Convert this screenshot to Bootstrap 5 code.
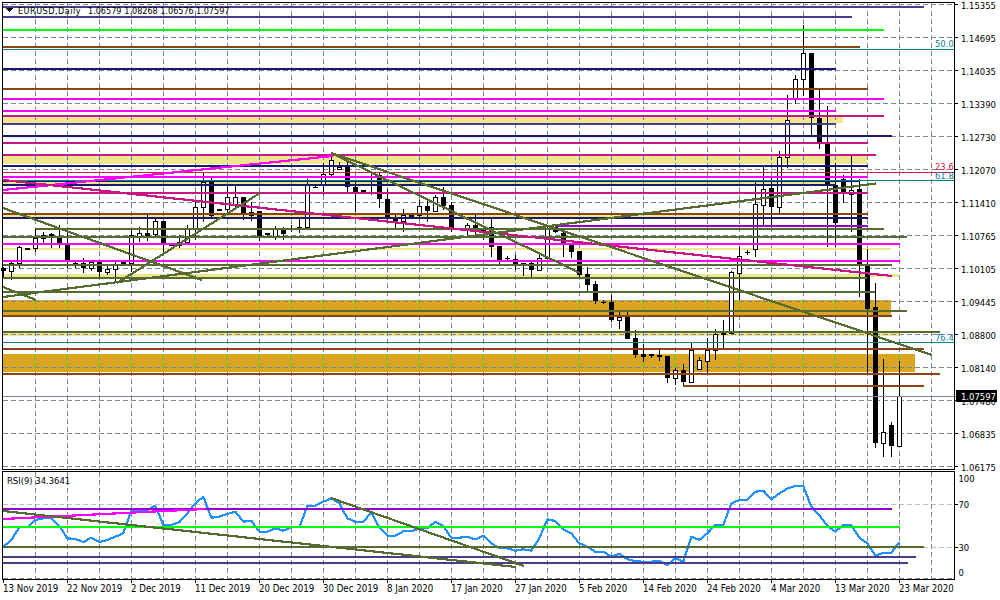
<!DOCTYPE html>
<html lang="en">
<head>
<meta charset="utf-8">
<title>EURUSD,Daily</title>
<link href="https://cdn.jsdelivr.net/npm/bootstrap@5.3.0/dist/css/bootstrap.min.css" rel="stylesheet">
<style>
html,body{margin:0;background:#fff;overflow:hidden}
.term{width:1000px;height:600px}
.term svg{display:block;flex:none;overflow:visible}
.term text{font-family:"DejaVu Sans Condensed","Liberation Sans",sans-serif;font-size:9.4px;fill:#000;dominant-baseline:central}
.term .hd{font-size:9px}
.term .sym{letter-spacing:.5px}
.term .pl{fill:#fff}
.term .dt{font-size:9.6px}
</style>
</head>
<body>
<div class="term d-flex flex-column bg-white" id="term">
<svg id="pane" width="1000" height="470" viewBox="0 0 1000 470" shape-rendering="crispEdges"></svg>
<svg id="osc" width="1000" height="110" viewBox="0 470 1000 110" shape-rendering="crispEdges"></svg>
<svg id="axis" width="1000" height="20" viewBox="0 580 1000 20" shape-rendering="crispEdges"></svg>
</div>
<script>
const C={dsb:'#483d8b',lime:'#00ff00',br:'#8b4513',nv:'#191970',mg:'#ff00ff',mvr:'#c71585',kh:'#f0e68c',ol:'#556b2f',dv:'#9400d3',go:'#daa520',gr:'#778899'};
const rect=(x,y,w,h,f)=>`<rect x="${x}" y="${y}" width="${w}" height="${h}" fill="${f}"/>`;
const hl=(y,x2,c,x1=3)=>rect(x1,y-1,x2-x1,2,c);
const ln=(x1,y1,x2,y2,c,w=1)=>`<line x1="${x1}" y1="${y1}" x2="${x2}" y2="${y2}" stroke="${c}" stroke-width="${w}"/>`;
const dash=(x1,y1,x2,y2,c)=>`<line x1="${x1}" y1="${y1}" x2="${x2}" y2="${y2}" stroke="${c}" stroke-dasharray="5 3"/>`;
const txt=(x,y,t,cl='',fill='')=>`<text x="${x}" y="${y}"${cl?` class="${cl}"`:''}${fill?` style="fill:${fill}"`:''}>${t}</text>`;
const pane=document.getElementById('pane'),osc=document.getElementById('osc'),axis=document.getElementById('axis');
const vx=[];for(let k=1;k<=29;k++)vx.push(3.5+32*k);
let h='';
/* zones */
const zones=[[117,123,843,C.kh],[156,164,867,C.kh],[182,184,836,C.kh],[215,217,763,C.kh],[248,250,891,C.kh],[274,277,899,C.kh],[300,315,891,C.go],[333,336,899,C.kh],[354,372,915,C.go]];
zones.forEach(z=>h+=rect(3,z[0],z[2]-3,z[1]-z[0],z[3]));
/* grid */
const gy=[[4.5,'1.15355'],[37.5,'1.14695'],[70.5,'1.14035'],[103.5,'1.13390'],[136.5,'1.12730'],[169.5,'1.12070'],[202.5,'1.11410'],[235.5,'1.10765'],[268.5,'1.10105'],[301.5,'1.09445'],[334.5,'1.08800'],[367.5,'1.08140'],[400.5,'1.07480'],[433.5,'1.06835'],[466.5,'1.06175']];
gy.forEach(g=>h+=dash(3,g[0],954,g[0],C.gr));
vx.forEach(x=>{h+=dash(x,3,x,469,C.gr);
 zones.forEach(z=>{if(x<z[2]&&z[1]-z[0]>=3){const col=z[3]===C.go?'#38d038':'#5a78ff';
   for(let y=3;y<469;y+=8){const a=Math.max(y,z[0]),b=Math.min(y+5,z[1]);if(b>a)h+=ln(x,a,x,b,col);}}});
});
/* candles: k, type, top, bottom, high, low */
const cs=[[0,'b',268,271,267,277],[1,'w',263,271,262,280],[2,'w',247,263,246,268],[3,'b',248,250,248,250],[4,'w',238,248,229,252],[5,'w',235,238,232,243],[6,'b',234,236,233,248],[7,'b',237,243,225,248],[8,'b',245,262,233,268],[9,'b',263,266,262,268],[10,'b',263,268,258,273],[11,'w',262,268,260,271],[12,'b',262,272,262,277],[13,'w',269,272,266,275],[14,'w',265,269,262,282],[15,'b',262,264,262,264],[16,'w',235,263,230,272],[17,'w',233,236,227,242],[18,'b',233,236,215,241],[19,'w',221,234,218,237],[20,'b',221,243,221,253],[21,'b',245,246,245,246],[22,'w',242,245,235,248],[23,'w',228,242,225,243],[24,'w',207,228,200,240],[25,'w',182,207,173,222],[26,'b',182,216,178,218],[27,'b',209,211,209,211],[28,'w',197,209,186,212],[29,'w',197,205,186,208],[30,'b',197,215,197,220],[31,'b',212,216,202,221],[32,'b',211,236,211,241],[33,'b',233,235,233,237],[34,'w',228,236,226,240],[35,'b',230,234,227,240],[36,'b',228,229,225,232],[37,'w',227,229,218,233],[38,'w',185,227,179,228],[39,'b',187,188,186,188],[40,'w',174,185,163,195],[41,'w',160,174,153,176],[42,'w',167,169,162,170],[43,'b',166,187,162,192],[44,'b',187,192,182,212],[45,'b',190,192,190,192],[46,'w',176,177,172,195],[47,'b',175,199,172,208],[48,'b',199,219,189,222],[49,'b',218,222,215,228],[50,'w',215,221,209,232],[51,'b',215,217,215,217],[52,'w',206,215,200,217],[53,'b',206,211,201,222],[54,'w',197,211,195,212],[55,'b',197,206,187,210],[56,'b',205,228,202,232],[57,'b',228,229,228,229],[58,'w',225,230,223,236],[59,'b',225,232,215,234],[60,'b',230,231,228,240],[61,'b',227,247,219,257],[62,'b',246,261,246,264],[63,'b',258,259,256,262],[64,'b',259,264,255,270],[65,'b',263,264,263,276],[66,'b',263,270,261,277],[67,'w',258,270,255,271],[68,'w',228,258,225,259],[69,'b',227,232,225,233],[70,'b',233,243,228,257],[71,'b',245,252,245,258],[72,'b',251,275,251,277],[73,'b',274,285,267,292],[74,'b',284,301,281,304],[75,'b',302,303,300,304],[76,'b',302,320,295,322],[77,'w',317,320,312,329],[78,'b',317,339,312,339],[79,'b',338,355,330,358],[80,'b',354,357,344,362],[81,'b',354,356,354,358],[82,'b',355,357,350,361],[83,'b',356,378,356,383],[84,'w',370,378,368,385],[85,'b',370,382,364,385],[86,'w',350,382,343,383],[87,'w',360,369,357,369],[88,'w',350,361,338,373],[89,'w',334,350,329,360],[90,'b',333,335,320,348],[91,'w',272,333,271,334],[92,'w',256,273,247,300],[93,'b',252,253,250,255],[94,'w',204,249,182,257],[95,'w',189,205,167,225],[96,'b',188,207,178,225],[97,'w',157,207,151,213],[98,'w',120,157,95,168],[99,'w',79,98,75,104],[100,'w',53,79,25,96],[101,'b',53,118,53,135],[102,'b',118,142,89,149],[103,'b',143,185,106,247],[104,'b',185,223,163,247],[105,'b',179,192,175,203],[106,'w',190,194,156,232],[107,'b',189,266,179,297],[108,'b',266,309,249,373],[109,'b',307,443,283,448],[110,'w',432,443,359,457],[111,'b',425,446,422,457],[112,'w',396,446,361,446]];
cs.forEach(c=>{const x=3+8*c[0];
 h+=rect(x,c[4],1,c[5]-c[4],'#000');
 if(c[1]==='b')h+=rect(x-2,c[2],5,Math.max(c[3]-c[2],1),'#000');
 else{h+=rect(x-2,c[2],5,c[3]-c[2]+1,'#000');h+=rect(x-1,c[2]+1,3,Math.max(c[3]-c[2]-1,0),'#fff');}
});
/* horizontal objects */
const ls=[[7,924,C.dsb],[17,852,C.dsb],[30,884,C.lime],[47,860,C.br],[69,836,C.nv],[89,868,C.br],[99,884,C.mg],[111,836,C.mg],[116,884,C.mvr],[124,836,C.dsb],[136,892,C.nv],[143,868,C.mvr],[155,876,C.mvr],[166,868,C.nv],[177,868,C.mg],[181,860,C.nv],[185,836,C.nv],[193,868,C.mvr],[214,868,C.br],[218,868,C.nv],[229,884,C.ol,36],[237,907,C.ol],[244,900,C.mg],[261,900,C.mg],[265,892,C.ol],[278,867,C.ol],[292,875,C.ol],[311,907,C.ol],[316,892,C.br],[332,940,C.ol],[349,924,C.br],[374,940,C.br],[386,924,C.br,683],[226,868,C.dv,555]];
ls.forEach(l=>h+=hl(l[0],l[1],l[2],l[3]||3));
/* fibo */
h+=rect(3,49,951,1,'#008080')+rect(3,172,951,1,'#dc143c')+rect(3,180,951,1,'#008080')+rect(3,342,951,1,'#008080');
/* trends */
[[3,190,333,156,C.mg],[3,180,892,276,C.mvr],[3,208,202,280,C.ol],[3,287,36,300,C.ol],[3,297,876,183.5,C.ol],[117,283,260,193,C.ol],[331,153,580,273,C.ol],[331,153,932,355,C.ol]].forEach(t=>h+=ln(t[0],t[1],t[2],t[3],t[4],2.2));
/* bid line */
h+=rect(3,396,953,1,C.gr);
/* frame */
h+=rect(2,2,953,1,'#000')+rect(2,2,1,468,'#000')+rect(954,2,1,468,'#000')+rect(2,469,953,1,'#000');
/* scale */
gy.forEach(g=>{h+=rect(955,Math.floor(g[0]),3,1,'#000');h+=txt(961,g[0]+.5,g[1]);});
h+=rect(956,390,41,12,'#000')+txt(961,396.5,'1.07597','pl');
/* header */
h+=`<polygon points="6,8 13,8 9.5,12" fill="#000"/>`+`<text class="hd" y="11"><tspan class="sym" x="18">EURUSD,Daily</tspan><tspan x="88">1.06579</tspan><tspan x="124.3">1.08268</tspan><tspan x="160.3">1.06576</tspan><tspan x="196">1.07597</tspan></text>`;
h+=txt(935,43.5,'50.0','fib','#0a7f96')+txt(935,166,'23.6','fib','#dc143c')+txt(935,175.5,'61.8','fib','#0a7f96')+txt(935,337,'76.4','fib','#0a7f96');
pane.innerHTML=h;

/* RSI */
const r7=[320,300,262,262,240,235,235,258,295,297,306,293,306,300,290,280,212,212,210,197,255,255,247,220,190,170,233,230,222,215,245,242,275,275,265,272,262,262,198,197,185,175,190,235,245,245,218,262,287,287,274,274,265,265,245,258,293,293,290,298,287,310,325,325,332,328,332,295,238,243,268,280,310,320,335,335,350,342,358,364,365,365,362].map(z=>440+z/3);
const r5=[495,475,485,410,420,400,375,375,310,300,300,275,272,298,280,266,258,258,320,345,378,395,375,375,413,430,467,458,458,427].map(z=>400+z/3);
const pts=r7.concat(r5).map((y,k)=>(3.3+8*k)+','+y.toFixed(1)).join(' ');
let o='';
o+=dash(3,504.5,954,504.5,'#c0c0c0')+dash(3,547.5,954,547.5,'#c0c0c0')+dash(3,578,954,578,C.gr);
vx.forEach(x=>o+=dash(x,472,x,578,C.gr));
o+=`<polyline points="${pts}" fill="none" stroke="#1e90ff" stroke-width="2.2" stroke-linejoin="round"/>`;
[[509,892,C.dv],[527,900,C.lime],[547,924,C.ol],[557,916,C.dsb],[563,908,C.dsb]].forEach(l=>o+=hl(l[0],l[1],l[2]));
[[3,519,205,509,C.mg],[3,511,516,567,C.ol],[331,498,524,566,C.ol]].forEach(t=>o+=ln(t[0],t[1],t[2],t[3],t[4],2.2));
o+=rect(2,471,953,1,'#000')+rect(2,471,1,109,'#000')+rect(954,471,1,109,'#000')+rect(2,579,953,1,'#000');
[[478.5,'100'],[504.5,'70'],[547.5,'30'],[572.5,'0']].forEach(l=>o+=txt(958.5,l[0],l[1]));
[504,547].forEach(y=>o+=rect(955,y,3,1,'#000'));
o+=txt(7,480.5,'RSI(9) 34.3641');
osc.innerHTML=o;

/* dates */
const ds=['13 Nov 2019','22 Nov 2019','2 Dec 2019','11 Dec 2019','20 Dec 2019','30 Dec 2019','8 Jan 2020','17 Jan 2020','27 Jan 2020','5 Feb 2020','14 Feb 2020','24 Feb 2020','4 Mar 2020','13 Mar 2020','23 Mar 2020'];
let a='';
ds.forEach((d,i)=>{const x=3+64*i;a+=rect(x,580,1,3,'#000');a+=txt(x,588.5,d,'dt');});
axis.innerHTML=a;
</script>
<script src="https://cdn.jsdelivr.net/npm/bootstrap@5.3.0/dist/js/bootstrap.bundle.min.js"></script>
</body>
</html>
